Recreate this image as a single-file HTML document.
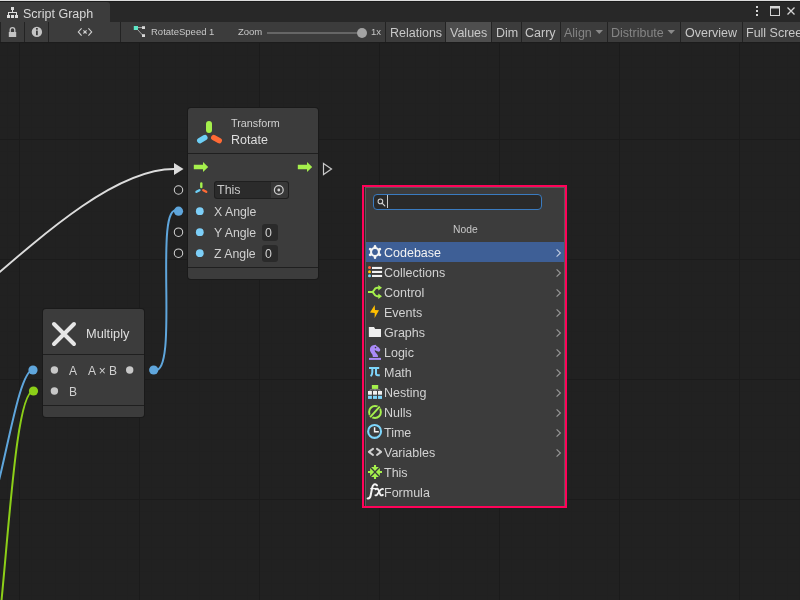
<!DOCTYPE html>
<html><head><meta charset="utf-8">
<style>
*{margin:0;padding:0;box-sizing:border-box}
html,body{width:800px;height:600px;overflow:hidden;background:#212121}
body{position:relative;font-family:"Liberation Sans",sans-serif;color:#d2d2d2}
.a{position:absolute}
.t{position:absolute;white-space:nowrap;line-height:1;will-change:transform}
svg{position:absolute;left:0;top:0;overflow:visible}
.sep{position:absolute;top:22px;width:1px;height:20px;background:#232323}
.tb{font-size:12.5px;color:#c8c8c8}
.node{position:absolute;background:#3c3c3c;border-radius:3px;box-shadow:0 0 0 1px #1a1a1a}
.row{position:absolute;left:366px;width:198px;height:20px}
.mi{position:absolute;left:18.5px;top:2.5px;font-size:12.5px;line-height:1;color:#d2d2d2;white-space:nowrap}
.chev{position:absolute;left:190px;top:7px}
</style></head><body>

<!-- canvas grid -->
<svg width="800" height="600">
  <defs>
    <pattern id="minor" x="7" y="7" width="12" height="12" patternUnits="userSpaceOnUse">
      <rect x="0" y="0" width="1" height="12" fill="#202020"/>
      <rect x="0" y="0" width="12" height="1" fill="#202020"/>
    </pattern>
    <pattern id="major" x="19" y="19" width="120" height="120" patternUnits="userSpaceOnUse">
      <rect x="0" y="0" width="1" height="120" fill="#1b1b1b"/>
      <rect x="0" y="0" width="120" height="1" fill="#1b1b1b"/>
    </pattern>
  </defs>
  <rect x="0" y="0" width="800" height="600" fill="#212121"/>
  <rect x="0" y="42" width="800" height="558" fill="url(#minor)"/>
  <rect x="0" y="42" width="800" height="558" fill="url(#major)"/>
</svg>

<!-- title bar -->
<div class="a" style="left:0;top:0;width:800px;height:1px;background:#dcdcdc"></div>
<div class="a" style="left:0;top:1px;width:800px;height:1px;background:#1b1b1b"></div>
<div class="a" style="left:0;top:2px;width:800px;height:20px;background:#282828"></div>
<div class="a" style="left:0;top:2px;width:110px;height:20px;background:#3c3c3c;border-top-right-radius:3px"></div>
<svg width="800" height="22">
  <g fill="#dedede">
    <rect x="11" y="7" width="3" height="3"/>
    <rect x="12" y="10" width="1" height="2.5"/>
    <rect x="8" y="12" width="9" height="1"/>
    <rect x="8" y="13" width="1" height="2"/>
    <rect x="16" y="13" width="1" height="2"/>
    <rect x="7" y="15" width="3" height="3"/>
    <rect x="11" y="15" width="3" height="3"/>
    <rect x="15" y="15" width="3" height="3"/>
  </g>
  <g fill="#d4d4d4">
    <rect x="756" y="6" width="2" height="2"/>
    <rect x="756" y="10" width="2" height="2"/>
    <rect x="756" y="14" width="2" height="2"/>
  </g>
  <rect x="770.5" y="6.5" width="9" height="9" fill="none" stroke="#d4d4d4" stroke-width="1"/>
  <rect x="770" y="6" width="10" height="2.5" fill="#d4d4d4"/>
  <path d="M787.5 7.5 L794.5 14.5 M794.5 7.5 L787.5 14.5" stroke="#d4d4d4" stroke-width="1.3"/>
</svg>
<div class="t" style="left:22.5px;top:7.6px;font-size:12.5px;color:#d8d8d8">Script Graph</div>

<!-- toolbar -->
<div class="a" style="left:0;top:22px;width:800px;height:20px;background:#3c3c3c"></div>
<div class="a" style="left:446px;top:22px;width:45px;height:20px;background:#4e4e4e"></div>
<div class="sep" style="left:0"></div>
<div class="sep" style="left:24px"></div>
<div class="sep" style="left:48px"></div>
<div class="sep" style="left:120px"></div>
<div class="sep" style="left:385px"></div>
<div class="sep" style="left:445px"></div>
<div class="sep" style="left:491px"></div>
<div class="sep" style="left:521px"></div>
<div class="sep" style="left:560px"></div>
<div class="sep" style="left:607px"></div>
<div class="sep" style="left:680px"></div>
<div class="sep" style="left:742px"></div>
<div class="a" style="left:0;top:42px;width:800px;height:1px;background:#1c1c1c"></div>
<svg width="800" height="42">
  <!-- lock -->
  <path d="M10.2 32 V30 A2.3 2.3 0 0 1 14.8 30 V32" fill="none" stroke="#c4c4c4" stroke-width="1.3"/>
  <rect x="8.8" y="32" width="7.4" height="5" fill="#c4c4c4"/>
  <!-- info -->
  <circle cx="36.9" cy="31.9" r="5.2" fill="#c4c4c4"/>
  <rect x="36" y="28" width="1.8" height="1.7" fill="#3c3c3c"/>
  <rect x="36" y="30.6" width="1.8" height="4.6" fill="#3c3c3c"/>
  <!-- <x> -->
  <path d="M81.6 28.3 L78.3 31.9 L81.6 35.6 M88.4 28.3 L91.7 31.9 L88.4 35.6" fill="none" stroke="#d0d0d0" stroke-width="1.1"/>
  <path d="M83.4 30.3 L86.6 33.5 M86.6 30.3 L83.4 33.5" stroke="#d0d0d0" stroke-width="1.1"/>
  <!-- graph icon -->
  <path d="M138 27.6 H142.5 M137.5 29.5 L142.5 35" stroke="#a8a8a8" stroke-width="1"/>
  <rect x="133.8" y="26" width="4.2" height="4" fill="#5ee6c6"/>
  <rect x="142" y="26.2" width="3" height="2.8" fill="#d8d8d8"/>
  <rect x="142" y="34.2" width="3" height="2.8" fill="#d8d8d8"/>
  <!-- slider -->
  <rect x="267" y="32" width="95" height="2" fill="#666"/>
  <circle cx="362" cy="33" r="5" fill="#a3a3a3"/>
  <!-- dropdown triangles -->
  <path d="M595.5 30 H603 L599.25 34 Z" fill="#8a8a8a"/>
  <path d="M667.5 30 H675 L671.25 34 Z" fill="#8a8a8a"/>
</svg>
<div class="t" style="left:150.5px;top:27.2px;font-size:9.5px;color:#c8c8c8">RotateSpeed 1</div>
<div class="t" style="left:237.5px;top:27.2px;font-size:9.5px;color:#c8c8c8">Zoom</div>
<div class="t" style="left:370.5px;top:27.2px;font-size:9.5px;color:#c8c8c8">1x</div>
<div class="t tb" style="left:390px;top:26.8px">Relations</div>
<div class="t tb" style="left:449.8px;top:26.8px">Values</div>
<div class="t tb" style="left:496px;top:26.8px">Dim</div>
<div class="t tb" style="left:524.5px;top:26.8px">Carry</div>
<div class="t tb" style="left:563.5px;top:26.8px;color:#858585">Align</div>
<div class="t tb" style="left:610.5px;top:26.8px;color:#858585">Distribute</div>
<div class="t tb" style="left:685px;top:26.8px">Overview</div>
<div class="t tb" style="left:746px;top:26.8px">Full Screen</div>

<!-- wires -->
<svg width="800" height="600">
  <path d="M-211.7 407.4 C-99.2 407.4 61.5 169 174 169" fill="none" stroke="#dcdcdc" stroke-width="1.9"/>
  <path d="M153.5 370 C180.9 379.2 151.9 197.4 178.5 211" fill="none" stroke="#5fa6dc" stroke-width="2"/>
  <path d="M-20.2 526.6 C-1.7 526.6 14.5 370 33 370" fill="none" stroke="#5fa6dc" stroke-width="2"/>
  <path d="M-22 717.7 C4.6 717.7 6.9 391 33.5 391" fill="none" stroke="#8ccf18" stroke-width="2"/>
</svg>

<!-- Rotate node -->
<div class="node" style="left:188px;top:108px;width:130px;height:171px"></div>
<div class="a" style="left:188px;top:153px;width:130px;height:1px;background:#1f1f1f"></div>
<div class="a" style="left:188px;top:267px;width:130px;height:1px;background:#1f1f1f"></div>
<div class="t" style="left:231px;top:118.2px;font-size:10.8px;color:#d0d0d0">Transform</div>
<div class="t" style="left:231px;top:133.7px;font-size:12.5px;color:#dedede">Rotate</div>
<svg width="800" height="600">
  <!-- header transform icon -->
  <line x1="209" y1="124" x2="209" y2="130" stroke="#a5f04c" stroke-width="6" stroke-linecap="round"/>
  <line x1="199.8" y1="140.6" x2="204.8" y2="137.6" stroke="#6dcff6" stroke-width="5.5" stroke-linecap="round"/>
  <line x1="213.8" y1="137.6" x2="219.2" y2="140.6" stroke="#ff6a35" stroke-width="5.5" stroke-linecap="round"/>
  <!-- flow in triangle -->
  <path d="M174 163 L183.5 169 L174 175 Z" fill="#dcdcdc"/>
  <!-- green arrows -->
  <path d="M193.8 164.8 H203 V162 L208.2 167 L203 172 V169.2 H193.8 Z" fill="#a5f04c"/>
  <path d="M297.8 164.8 H307 V162 L312.2 167 L307 172 V169.2 H297.8 Z" fill="#a5f04c"/>
  <!-- flow out hollow triangle -->
  <path d="M323.5 163.5 L331.5 169 L323.5 174.5 Z" fill="none" stroke="#c8c8c8" stroke-width="1.2" stroke-linejoin="miter"/>
  <!-- ports outside -->
  <circle cx="178.5" cy="190" r="4.2" fill="none" stroke="#d0d0d0" stroke-width="1.05"/>
  <circle cx="178.5" cy="211.2" r="4.6" fill="#5fa6dc"/>
  <circle cx="178.5" cy="232.2" r="4.2" fill="none" stroke="#d0d0d0" stroke-width="1.05"/>
  <circle cx="178.5" cy="253.2" r="4.2" fill="none" stroke="#d0d0d0" stroke-width="1.05"/>
  <!-- small transform icon -->
  <line x1="201.3" y1="183.5" x2="201.3" y2="187" stroke="#a5f04c" stroke-width="2.4" stroke-linecap="round"/>
  <line x1="196.5" y1="191.8" x2="199.4" y2="190.2" stroke="#6dcff6" stroke-width="2.4" stroke-linecap="round"/>
  <line x1="203.3" y1="190.2" x2="206.2" y2="191.8" stroke="#ff6a35" stroke-width="2.4" stroke-linecap="round"/>
  <!-- inner value dots -->
  <circle cx="199.8" cy="211.2" r="3.9" fill="#7dcff8"/>
  <circle cx="199.8" cy="232.2" r="3.9" fill="#7dcff8"/>
  <circle cx="199.8" cy="253.2" r="3.9" fill="#7dcff8"/>
</svg>
<!-- This field -->
<div class="a" style="left:214px;top:181px;width:75px;height:18px;border-radius:3px;background:#1f1f1f"></div>
<div class="a" style="left:215px;top:182px;width:56px;height:16px;border-radius:2px 0 0 2px;background:#2b2b2b"></div>
<div class="a" style="left:271px;top:182px;width:17px;height:16px;border-radius:0 2px 2px 0;background:#383838"></div>
<svg width="800" height="600">
  <circle cx="278.8" cy="190" r="4.4" fill="none" stroke="#d0d0d0" stroke-width="1.2"/>
  <circle cx="278.8" cy="190" r="1.4" fill="#d0d0d0"/>
</svg>
<div class="t" style="left:217px;top:183.7px;font-size:12.5px;color:#c8c8c8">This</div>
<div class="t" style="left:214px;top:205.9px;font-size:12.3px;color:#d0d0d0">X Angle</div>
<div class="t" style="left:214px;top:226.9px;font-size:12.3px;color:#d0d0d0">Y Angle</div>
<div class="t" style="left:214px;top:247.9px;font-size:12.3px;color:#d0d0d0">Z Angle</div>
<div class="a" style="left:262px;top:223.5px;width:16px;height:17px;border-radius:3px;background:#2a2a2a"></div>
<div class="a" style="left:262px;top:244.5px;width:16px;height:17px;border-radius:3px;background:#2a2a2a"></div>
<div class="t" style="left:265px;top:226.9px;font-size:12.3px;color:#d0d0d0">0</div>
<div class="t" style="left:265px;top:247.9px;font-size:12.3px;color:#d0d0d0">0</div>

<!-- Multiply node -->
<div class="node" style="left:43px;top:309px;width:101px;height:108px"></div>
<div class="a" style="left:43px;top:354px;width:101px;height:1px;background:#1f1f1f"></div>
<div class="a" style="left:43px;top:405px;width:101px;height:1px;background:#1f1f1f"></div>
<svg width="800" height="600">
  <path d="M54 324 L74 344 M74 324 L54 344" stroke="#e6e6e6" stroke-width="4" stroke-linecap="round"/>
  <circle cx="54.4" cy="370" r="3.7" fill="#c8c8c8"/>
  <circle cx="54.4" cy="391" r="3.7" fill="#c8c8c8"/>
  <circle cx="129.7" cy="370" r="3.7" fill="#c8c8c8"/>
  <circle cx="33" cy="370" r="4.6" fill="#5fa6dc"/>
  <circle cx="33.5" cy="391" r="4.6" fill="#8ccf18"/>
  <circle cx="153.7" cy="370" r="4.6" fill="#5fa6dc"/>
</svg>
<div class="t" style="left:86px;top:328.4px;font-size:12.8px;color:#dedede">Multiply</div>
<div class="t" style="left:68.5px;top:365.1px;font-size:12px;color:#d0d0d0">A</div>
<div class="t" style="left:87.5px;top:365.1px;font-size:12px;color:#d0d0d0">A × B</div>
<div class="t" style="left:69px;top:386.1px;font-size:12px;color:#d0d0d0">B</div>

<!-- popup -->
<div class="a" style="left:362px;top:185px;width:205px;height:323px;background:#ff0259"></div>
<div class="a" style="left:364px;top:187px;width:201px;height:319px;background:#262626"></div>
<div class="a" style="left:365px;top:187px;width:200px;height:319px;background:#5c5c5c"></div>
<div class="a" style="left:366px;top:188px;width:198px;height:318px;background:#3c3c3c"></div>
<div class="a" style="left:373px;top:194px;width:169px;height:16px;border:1px solid #3a7bc0;border-radius:4px;background:#2a2a2a"></div>
<svg width="800" height="600">
  <circle cx="380.4" cy="201.4" r="2.3" fill="none" stroke="#d0d0d0" stroke-width="1.05"/>
  <path d="M382 203.1 L384.8 205.9" stroke="#d0d0d0" stroke-width="1.2" stroke-linecap="round"/>
  <rect x="387" y="195" width="1" height="13" fill="#cccccc"/>
</svg>
<div class="t" style="left:452.5px;top:224.5px;font-size:10.3px;color:#c8c8c8">Node</div>
<div class="a" style="left:366px;top:242px;width:198px;height:20px;background:#3e5f96"></div>
<div class="t" style="left:384px;top:246.7px;font-size:12.5px;color:#f2f2f2">Codebase</div>
<div class="t" style="left:384px;top:266.7px;font-size:12.5px;color:#d2d2d2">Collections</div>
<div class="t" style="left:384px;top:286.7px;font-size:12.5px;color:#d2d2d2">Control</div>
<div class="t" style="left:384px;top:306.7px;font-size:12.5px;color:#d2d2d2">Events</div>
<div class="t" style="left:384px;top:326.7px;font-size:12.5px;color:#d2d2d2">Graphs</div>
<div class="t" style="left:384px;top:346.7px;font-size:12.5px;color:#d2d2d2">Logic</div>
<div class="t" style="left:384px;top:366.7px;font-size:12.5px;color:#d2d2d2">Math</div>
<div class="t" style="left:384px;top:386.7px;font-size:12.5px;color:#d2d2d2">Nesting</div>
<div class="t" style="left:384px;top:406.7px;font-size:12.5px;color:#d2d2d2">Nulls</div>
<div class="t" style="left:384px;top:426.7px;font-size:12.5px;color:#d2d2d2">Time</div>
<div class="t" style="left:384px;top:446.7px;font-size:12.5px;color:#d2d2d2">Variables</div>
<div class="t" style="left:384px;top:466.7px;font-size:12.5px;color:#d2d2d2">This</div>
<div class="t" style="left:384px;top:486.7px;font-size:12.5px;color:#d2d2d2">Formula</div>
<svg width="800" height="600">
<path d="M556.6 249.4 L560.4 253.0 L556.6 256.6" fill="none" stroke="#c2cde0" stroke-width="1.1"/>
<path d="M556.6 269.4 L560.4 273.0 L556.6 276.6" fill="none" stroke="#989898" stroke-width="1.15"/>
<path d="M556.6 289.4 L560.4 293.0 L556.6 296.6" fill="none" stroke="#989898" stroke-width="1.15"/>
<path d="M556.6 309.4 L560.4 313.0 L556.6 316.6" fill="none" stroke="#989898" stroke-width="1.15"/>
<path d="M556.6 329.4 L560.4 333.0 L556.6 336.6" fill="none" stroke="#989898" stroke-width="1.15"/>
<path d="M556.6 349.4 L560.4 353.0 L556.6 356.6" fill="none" stroke="#989898" stroke-width="1.15"/>
<path d="M556.6 369.4 L560.4 373.0 L556.6 376.6" fill="none" stroke="#989898" stroke-width="1.15"/>
<path d="M556.6 389.4 L560.4 393.0 L556.6 396.6" fill="none" stroke="#989898" stroke-width="1.15"/>
<path d="M556.6 409.4 L560.4 413.0 L556.6 416.6" fill="none" stroke="#989898" stroke-width="1.15"/>
<path d="M556.6 429.4 L560.4 433.0 L556.6 436.6" fill="none" stroke="#989898" stroke-width="1.15"/>
<path d="M556.6 449.4 L560.4 453.0 L556.6 456.6" fill="none" stroke="#989898" stroke-width="1.15"/>
</svg>
<svg width="800" height="600">
  <!-- gear -->
  <g stroke="#f4f4f4" fill="none">
    <circle cx="375" cy="252" r="3.95" stroke-width="2.1"/>
    <g stroke-width="2.5" stroke-linecap="round">
      <line x1="375.00" y1="247.60" x2="375.00" y2="246.30"/>
      <line x1="378.81" y1="249.80" x2="379.94" y2="249.15"/>
      <line x1="378.81" y1="254.20" x2="379.94" y2="254.85"/>
      <line x1="375.00" y1="256.40" x2="375.00" y2="257.70"/>
      <line x1="371.19" y1="254.20" x2="370.06" y2="254.85"/>
      <line x1="371.19" y1="249.80" x2="370.06" y2="249.15"/>
    </g>
  </g>
  <!-- collections -->
  <circle cx="369.5" cy="267.6" r="1.5" fill="#ff6a3d"/>
  <circle cx="369.5" cy="271.7" r="1.5" fill="#ffc20e"/>
  <circle cx="369.5" cy="275.7" r="1.5" fill="#7dd5f8"/>
  <rect x="372" y="266.9" width="10.1" height="2.1" fill="#f2f2f2"/>
  <rect x="372" y="270.9" width="10.1" height="2.1" fill="#f2f2f2"/>
  <rect x="372" y="274.9" width="10.1" height="2.1" fill="#f2f2f2"/>
  <!-- control -->
  <g fill="none" stroke="#a5f04c" stroke-width="2">
    <path d="M368 292 H371.8 Q373 292 374 290.2 Q375.2 287.8 377 287.8 H379"/>
    <path d="M368 292 H371.8 Q373 292 374 293.8 Q375.2 296.2 377 296.2 H379"/>
  </g>
  <path d="M378.3 285 L382 287.8 L378.3 290.6 Z M378.3 293.4 L382 296.2 L378.3 299 Z" fill="#a5f04c"/>
  <!-- events -->
  <path d="M374.7 305 L375 310 L379 310.2 L374.6 318 L374.7 312.9 L370 312.6 Z" fill="#ffbf00"/>
  <!-- graphs -->
  <path d="M368.85 326.9 H374 L375.2 328.9 H381 V337 H368.85 Z" fill="#eeeeee"/>
  <!-- logic knight -->
  <path d="M375.6 344.7 L376.6 346 Q379.2 347.4 380.3 349.6 L380 350.9 L378.6 351.8 Q376.5 351.1 374.7 349.9 Q374.6 351.7 376.3 353.2 Q378.2 354.7 378.1 356.9 H372.9 Q372.9 354.6 371.2 353 Q369.8 351.6 369.9 349.3 Q370.2 346.1 373.2 345.3 Z" fill="#a98af8"/>
  <circle cx="375.5" cy="347.6" r="0.8" fill="#3c3c3c"/>
  <rect x="369" y="357.9" width="12" height="2" fill="#a98af8"/>
  <!-- math pi -->
  <g fill="none" stroke="#7dd5fb" stroke-width="2">
    <path d="M369 368 H379.2"/>
    <path d="M372.3 368.5 V372.3 Q372.3 375 370.6 376.2"/>
    <path d="M376 368.5 V373.6 Q376 375.3 377.8 375.3 H379.8"/>
  </g>
  <!-- nesting -->
  <rect x="371.85" y="385" width="6.35" height="3.9" fill="#a5f04c"/>
  <path d="M370 391 V389.8 H380 V391 M375 389 V391" fill="none" stroke="#9a9a9a" stroke-width="0.8"/>
  <g fill="#f0f0f0">
    <rect x="368" y="391" width="3.9" height="3.7"/>
    <rect x="373" y="391" width="4" height="3.7"/>
    <rect x="378" y="391" width="4" height="3.7"/>
  </g>
  <g fill="#7dd5fb">
    <rect x="368" y="395.8" width="3.9" height="3.1"/>
    <rect x="373" y="395.8" width="4" height="3.1"/>
    <rect x="378" y="395.8" width="4" height="3.1"/>
  </g>
  <!-- nulls -->
  <circle cx="375" cy="412" r="5.9" fill="none" stroke="#a5f04c" stroke-width="2"/>
  <line x1="370.2" y1="417.1" x2="379.7" y2="406.6" stroke="#3c3c3c" stroke-width="3.6"/>
  <line x1="370.2" y1="417.1" x2="379.7" y2="406.6" stroke="#a5f04c" stroke-width="1.9"/>
  <!-- time -->
  <circle cx="374.6" cy="431.4" r="6.45" fill="none" stroke="#7dd5fb" stroke-width="2.1"/>
  <path d="M374.6 427.2 V431.8 H378.8" fill="none" stroke="#f4f4f4" stroke-width="1.5"/>
  <!-- variables -->
  <path d="M373 448.9 L368.9 451.9 L373 455 M377 448.9 L381.1 451.9 L377 455" fill="none" stroke="#d0d0d0" stroke-width="2" stroke-linecap="round" stroke-linejoin="round"/>
  <!-- this -->
  <g fill="#a5f04c">
    <path d="M373.95 465 H376.05 V467.1 H378.9 L375 471.1 L371.1 467.1 H373.95 Z" transform="rotate(0 375 472)"/>
    <path d="M373.95 465 H376.05 V467.1 H378.9 L375 471.1 L371.1 467.1 H373.95 Z" transform="rotate(90 375 472)"/>
    <path d="M373.95 465 H376.05 V467.1 H378.9 L375 471.1 L371.1 467.1 H373.95 Z" transform="rotate(180 375 472)"/>
    <path d="M373.95 465 H376.05 V467.1 H378.9 L375 471.1 L371.1 467.1 H373.95 Z" transform="rotate(270 375 472)"/>
  </g>
</svg>
<svg width="800" height="600">
  <path d="M377 485.4 Q375.8 483.7 374 484.5 Q372.6 485.3 372.1 488 L370.6 495.8 Q370 498.8 367.6 498.4" fill="none" stroke="#f4f4f4" stroke-width="2" stroke-linecap="round"/>
  <path d="M370.3 488.6 H376" stroke="#f4f4f4" stroke-width="1.3"/>
  <path d="M375.6 489.3 Q377.6 487.8 378.6 490.2 L379.9 493.8 Q380.7 496.2 382.9 494.9" fill="none" stroke="#f4f4f4" stroke-width="1.9" stroke-linecap="round"/>
  <path d="M383 489 Q381.4 488.2 379.4 491.2 L377.6 494 Q376.6 495.9 375.3 495.2" fill="none" stroke="#f4f4f4" stroke-width="1.7" stroke-linecap="round"/>
</svg>
</body></html>
